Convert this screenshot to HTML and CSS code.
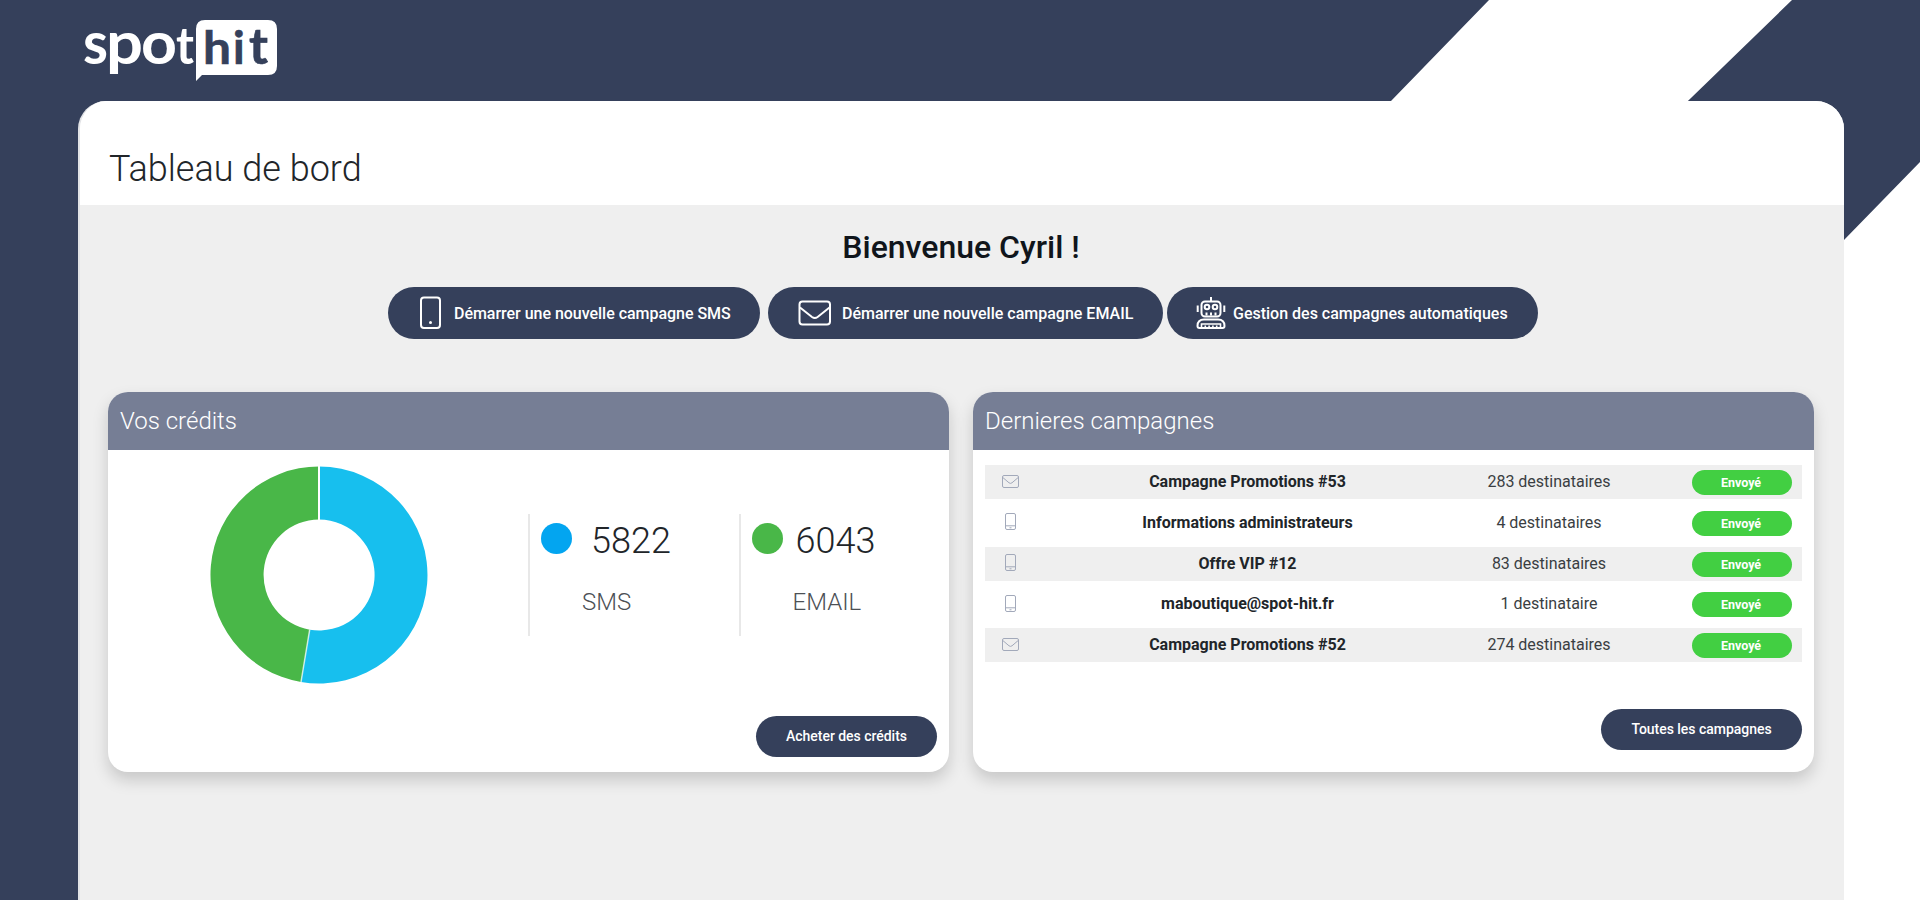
FILE: index.html
```html
<!DOCTYPE html>
<html lang="fr">
<head>
<meta charset="utf-8">
<title>Tableau de bord</title>
<link rel="stylesheet" href="styles.css">
</head>
<body>
<svg class="backdrop" viewBox="0 0 1920 900" aria-hidden="true">
  <path d="M0 0H1489L1391 101V900H0ZM1792 0H1920V162L1844 240V300H1530V254Z"/>
</svg>
<header class="topbar">
  <svg class="logo" viewBox="0 0 194 64" role="img" aria-label="spothit">
    <path class="logo-bubble" d="M121 0H184Q193 0 193 9V46Q193 55 184 55H118L112 61V9Q112 0 121 0Z"/>
    <g class="logo-spot"><text x="-1" y="44" textLength="25" lengthAdjust="spacingAndGlyphs">s</text><text x="22" y="44" textLength="37" lengthAdjust="spacingAndGlyphs">p</text><text x="57" y="44" textLength="36" lengthAdjust="spacingAndGlyphs">o</text><text x="92" y="44" class="logo-t" textLength="18" lengthAdjust="spacingAndGlyphs">t</text></g>
    <g class="logo-hit"><text x="119" y="44" textLength="28" lengthAdjust="spacingAndGlyphs">h</text><text x="149" y="44">i</text><text x="165" y="44" class="logo-t2" textLength="19" lengthAdjust="spacingAndGlyphs">t</text></g>
  </svg>
</header>
<main class="page">
  <div class="page-head"><h1>Tableau de bord</h1></div>
  <div class="page-body">
    <h2 class="welcome">Bienvenue Cyril !</h2>
    <nav class="actions">
      <a class="btn btn-sms"><svg class="ico-phone" viewBox="0 0 22 34"><rect x="1" y="1.500" width="19" height="30.500" rx="3"/><circle cx="10.500" cy="26.500" r="1.500"/></svg><span>Démarrer une nouvelle campagne SMS</span></a>
      <a class="btn btn-email"><svg class="ico-mail" viewBox="0 0 34 26"><rect x="1.500" y="1.500" width="30.500" height="23" rx="3"/><path d="M2 7.500L14 17Q16.800 19 19.600 17L31.500 7.500"/></svg><span>Démarrer une nouvelle campagne EMAIL</span></a>
      <a class="btn btn-auto"><svg class="ico-robot" viewBox="0 0 30 34"><path d="M15 1V5M1.700 9.500V16M28.300 9.500V16"/><rect x="5.500" y="5.500" width="19" height="15" rx="3.500"/><circle cx="11" cy="11" r="2.300"/><circle cx="19" cy="11" r="2.300"/><path d="M10.500 19.500V16.500M15 19.500V16.500M19.500 19.500V16.500M8 23.500H22Q28.500 23.500 28.500 30Q28.500 32 26.500 32H3.500Q1.500 32 1.500 30Q1.500 23.500 8 23.500Z"/><path class="fine" d="M5.500 31V28H24.500V31M9.300 29.500V31M13.100 29.500V31M16.900 29.500V31M20.700 29.500V31"/></svg><span>Gestion des campagnes automatiques</span></a>
    </nav>
    <div class="cards">
      <section class="card">
        <h3>Vos crédits</h3>
        <div class="credits">
          <svg class="donut" viewBox="-109 -109 218 218"><path class="blue" d="M0-108.500A108.500 108.500 0 1 1 -18 107L-9.300 54.700A55.500 55.500 0 1 0 0-55.500Z"/><path class="green" d="M0-108.500A108.500 108.500 0 0 0 -18 107L-9.300 54.700A55.500 55.500 0 0 1 0-55.500Z"/><path class="cut" d="M0-109V-55"/><path class="cut soft" d="M-18 107L-9.300 54.700"/></svg>
          <div class="stat"><div class="stat-top"><i class="dot dot-sms"></i><span class="num">5822</span></div><span class="label">SMS</span></div>
          <div class="stat stat-email"><div class="stat-top"><i class="dot dot-email"></i><span class="num">6043</span></div><span class="label">EMAIL</span></div>
        </div>
        <a class="btn-small">Acheter des crédits</a>
      </section>
      <section class="card">
        <h3>Dernieres campagnes</h3>
        <ul class="rows">
          <li><svg class="row-mail" viewBox="0 0 17 13"><rect x=".5" y=".5" width="16" height="12" rx="1.500"/><path d="M.8 2.500L7 7.800Q8.500 9 10 7.800L16.200 2.500"/></svg><b>Campagne Promotions #53</b><span>283 destinataires</span><em>Envoyé</em></li>
          <li><svg class="row-phone" viewBox="0 0 11 17"><rect x=".5" y=".5" width="10" height="16" rx="1.500"/><path d="M.5 12.800H10.500M4.500 14.800H6.500"/></svg><b>Informations administrateurs</b><span>4 destinataires</span><em>Envoyé</em></li>
          <li><svg class="row-phone" viewBox="0 0 11 17"><rect x=".5" y=".5" width="10" height="16" rx="1.500"/><path d="M.5 12.800H10.500M4.500 14.800H6.500"/></svg><b>Offre VIP #12</b><span>83 destinataires</span><em>Envoyé</em></li>
          <li><svg class="row-phone" viewBox="0 0 11 17"><rect x=".5" y=".5" width="10" height="16" rx="1.500"/><path d="M.5 12.800H10.500M4.500 14.800H6.500"/></svg><b>maboutique@spot-hit.fr</b><span>1 destinataire</span><em>Envoyé</em></li>
          <li><svg class="row-mail" viewBox="0 0 17 13"><rect x=".5" y=".5" width="16" height="12" rx="1.500"/><path d="M.8 2.500L7 7.800Q8.500 9 10 7.800L16.200 2.500"/></svg><b>Campagne Promotions #52</b><span>274 destinataires</span><em>Envoyé</em></li>
        </ul>
        <a class="btn-small btn-all">Toutes les campagnes</a>
      </section>
    </div>
  </div>
</main>
</body>
</html>
```
FILE: styles.css
```css
* { box-sizing: border-box; }
html { background: #fff; }
body {
  margin: 0;
  height: 900px;
  overflow: hidden;
  font-family: Roboto, "Liberation Sans", sans-serif;
  color: #212529;
}
h1, h2, h3, ul { margin: 0; padding: 0; }
h1, h3 { font-weight: 300; }
svg { display: block; flex: none; }

.backdrop { position: absolute; left: 0; top: 0; width: 1920px; height: 900px; z-index: -1; fill: #35405b; }

.topbar { height: 101px; padding: 20px 0 0 84px; }
.logo { width: 194px; height: 64px; overflow: visible; fill: #fff; font-family: Lato, sans-serif; font-weight: 700; }
.logo-spot { font-size: 59px; }
.logo-t { font-size: 52px; }
.logo-hit { font-size: 46px; fill: #35405b; stroke: #35405b; stroke-width: .6px; }
.logo-t2 { font-size: 50px; }

.page { width: 1766px; height: 799px; margin-left: 78px; background: #efefef; border-left: 2px solid #e2e3e6; border-radius: 28px 28px 0 0; overflow: hidden; }
.page-head { height: 104px; margin-left: -2px; padding: 46px 0 0 31px; background: #fff; }
.page-head h1 { font-size: 36px; line-height: 44px; color: #212529; }
.page-body { padding: 22px 30px 0 28px; }
.welcome { text-align: center; font-size: 32px; font-weight: 500; line-height: 40px; color: #10151b; }

.actions { display: flex; margin: 20px 0 0 280px; }
.btn { display: flex; align-items: center; height: 52px; border-radius: 26px; background: #35405b; color: #fff; font-size: 16px; font-weight: 500; white-space: nowrap; }
.btn svg { fill: none; stroke: #fff; stroke-width: 2; }
.btn .fine { stroke-width: 1.600px; }
.btn-sms { width: 372px; padding-left: 32px; letter-spacing: -.03px; }
.btn-email { width: 395px; margin-left: 8px; padding-left: 30px; }
.btn-auto { width: 371px; margin-left: 4px; padding-left: 29px; }
.ico-phone { width: 22px; height: 34px; margin-right: 12px; }
.btn .ico-phone circle { fill: #fff; stroke: none; }
.ico-mail { width: 34px; height: 26px; margin-right: 10px; }
.ico-robot { width: 30px; height: 34px; margin-right: 7px; }

.cards { display: grid; grid-template-columns: 841px 841px; column-gap: 24px; margin-top: 53px; }
.card { display: flex; flex-direction: column; height: 380px; border-radius: 20px; background: #fff; box-shadow: 0 8px 16px rgba(0, 0, 0, .17); }
.card h3 { height: 58px; padding: 0 12px; border-radius: 20px 20px 0 0; background: #767e95; color: #fff; font-size: 24px; line-height: 58px; }

.credits { display: flex; height: 266px; padding-left: 102px; }
.donut { width: 218px; height: 218px; margin: 16px 100px 0 0; }
.blue { fill: #17bfee; }
.green { fill: #49b748; }
.cut { stroke: #fff; stroke-width: 2; }
.soft { opacity: .7; stroke-width: 1.500px; }
.stat { width: 211px; height: 122px; margin-top: 64px; padding: 9px 0 0 11px; border-left: 2px solid #e8e8e8; }
.stat-top { display: flex; height: 63px; }
.dot { width: 31px; height: 31px; border-radius: 50%; }
.dot-sms { background: #03a5f0; }
.dot-email { background: #49b748; }
.num { margin-left: 19px; font-size: 36px; font-weight: 300; line-height: 36px; }
.stat-email .num { margin-left: 13px; }
.label { margin-left: 41px; font-size: 24px; font-weight: 300; line-height: 32px; color: #4c5055; }
.btn-small { align-self: flex-end; width: 181px; height: 41px; margin-right: 12px; border-radius: 21px; background: #35405b; color: #fff; font-size: 14px; font-weight: 500; letter-spacing: -.03px; line-height: 41px; text-align: center; }
.btn-all { width: 201px; margin-top: 47px; }

.rows { list-style: none; margin: 15px 12px 0; display: flex; flex-direction: column; gap: 6.75px; }
.rows li { display: grid; grid-template-columns: 50px 425px 178px 1fr; align-items: center; height: 34px; }
.rows li:nth-child(odd) { background: #efefef; }
.rows svg { fill: none; stroke: #a2a9ba; justify-self: center; margin-bottom: 2px; }
.row-mail { width: 17px; height: 13px; }
.row-phone { width: 11px; height: 17px; }
.rows b, .rows span { padding-bottom: 1px; text-align: center; font-size: 16px; white-space: nowrap; }
.rows b { font-weight: 700; }
.rows span { font-weight: 400; color: #3a3e42; }
.rows em { justify-self: end; width: 100px; height: 25px; margin: 1px 10px 0 0; padding-right: 2px; border-radius: 13px; background: #42cf42; color: #fff; font-size: 12.500px; font-style: normal; font-weight: 700; line-height: 25px; text-align: center; }
```
